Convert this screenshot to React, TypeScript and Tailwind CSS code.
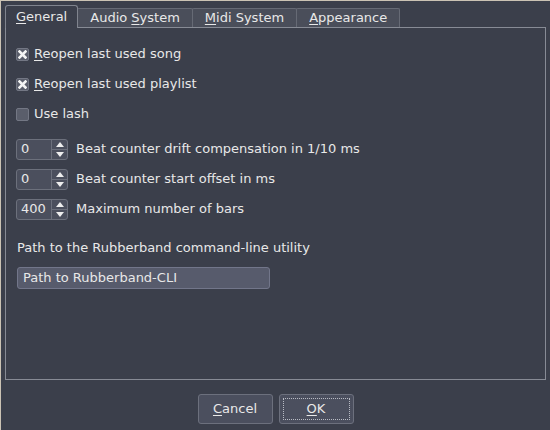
import React from 'react'

const Mn = ({ c }: { c: string }) => <span className="underline underline-offset-[2px]">{c}</span>

const Check = ({ label, mn, checked }: { label: string; mn?: boolean; checked?: boolean }) => (
  <div className="flex items-center h-[30px]">
    <div className="w-[13px] h-[13px] border border-[#737784] bg-[#5a5e6b] rounded-[2px] flex items-center justify-center">
      {checked && (
        <svg width="9" height="9" viewBox="0 0 9 9">
          <path d="M1.5 1.5 L7.5 7.5 M7.5 1.5 L1.5 7.5" stroke="#f4f4f4" strokeWidth="2.6" strokeLinecap="square" />
        </svg>
      )}
    </div>
    <span className="ml-[5px]">
      {mn ? (
        <>
          <Mn c={label[0]} />
          {label.slice(1)}
        </>
      ) : (
        label
      )}
    </span>
  </div>
)

const Spin = ({ value, label }: { value: string; label: string }) => (
  <div className="flex items-center h-[30px]">
    <div className="w-[52px] h-[21px] flex border border-[#6c707c] rounded-[3px] bg-[#4b4f5d]">
      <div className="flex-1 pl-[4px] flex items-center">{value}</div>
      <div className="w-[16px] flex flex-col border-l border-[#6c707c]">
        <div className="flex-1 flex items-center justify-center border-b border-[#6c707c]">
          <svg width="8" height="5" viewBox="0 0 8 5">
            <path d="M0 5 L4 0 L8 5 Z" fill="#eeeeee" />
          </svg>
        </div>
        <div className="flex-1 flex items-center justify-center">
          <svg width="8" height="5" viewBox="0 0 8 5">
            <path d="M0 0 L4 5 L8 0 Z" fill="#eeeeee" />
          </svg>
        </div>
      </div>
    </div>
    <span className="ml-[8px]">{label}</span>
  </div>
)

const Tab = ({ children, active }: { children: React.ReactNode; active?: boolean }) =>
  active ? (
    <div className="relative z-10 -mb-px h-[23px] px-[10px] flex items-center border border-b-0 border-[#80848e] rounded-t-[3px] bg-[#3b3f4b]">
      {children}
    </div>
  ) : (
    <div className="h-[19px] px-[12px] flex items-center border border-b-0 border-[#666a75] rounded-t-[2px] bg-[#4a4e5a] -ml-px">
      {children}
    </div>
  )

export default function App() {
  return (
    <div className="w-[550px] h-[430px] overflow-hidden bg-[#3b3f4b] border-t border-l border-[#cbc3b4] flex flex-col font-['DejaVu_Sans',sans-serif] text-[13px] text-[#e8e8e8]">
      <div className="pl-[4px] pr-[4px] pt-[4px]">
        <div className="flex items-end">
          <Tab active>
            <span>
              <Mn c="G" />
              eneral
            </span>
          </Tab>
          <Tab>
            <span>
              Audio <Mn c="S" />
              ystem
            </span>
          </Tab>
          <Tab>
            <span>
              <Mn c="M" />
              idi System
            </span>
          </Tab>
          <Tab>
            <span>
              <Mn c="A" />
              ppearance
            </span>
          </Tab>
        </div>
        <div className="h-[353px] border border-[#878b95] pl-[10px] pt-[11px]">
          <Check label="Reopen last used song" mn checked />
          <Check label="Reopen last used playlist" mn checked />
          <Check label="Use lash" />
          <div className="mt-[5px]">
            <Spin value="0" label="Beat counter drift compensation in 1/10 ms" />
            <Spin value="0" label="Beat counter start offset in ms" />
            <Spin value="400" label="Maximum number of bars" />
          </div>
          <div className="mt-[14px] ml-px">Path to the Rubberband command-line utility</div>
          <div className="mt-[9px] ml-px w-[253px] h-[22px] bg-[#575b6c] border border-[#72768a] rounded-[3px] pl-[5px] flex items-center">
            Path to Rubberband-CLI
          </div>
        </div>
      </div>
      <div className="flex justify-center gap-[6px] mt-[14px]">
        <button className="w-[75px] h-[30px] bg-[#4b4f5e] border border-[#6c707d] rounded-[3px]">
          <Mn c="C" />
          ancel
        </button>
        <button className="w-[75px] h-[30px] bg-[#4b4f5e] border border-[#6c707d] rounded-[3px] p-[3px]">
          <div className="w-full h-full border border-dotted border-[#b8bbc4] flex items-center justify-center">
            <span>
              <Mn c="O" />K
            </span>
          </div>
        </button>
      </div>
    </div>
  )
}
